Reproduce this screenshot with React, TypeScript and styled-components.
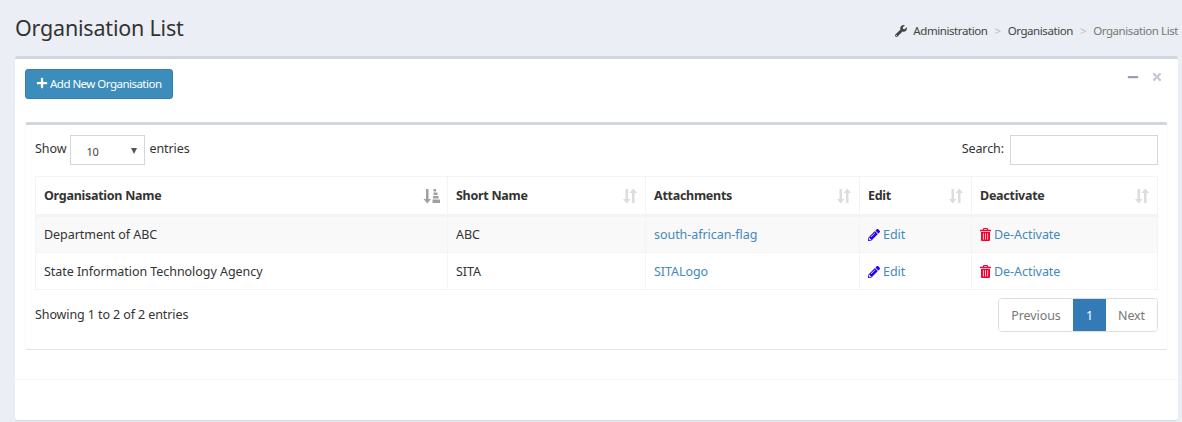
import React from "react";
import styled, { createGlobalStyle } from "styled-components";
import { FaWrench, FaPlus, FaMinus, FaTimes, FaPencilAlt } from "react-icons/fa";

const Global = createGlobalStyle`
  html, body { margin: 0; padding: 0; background: #ecf0f5; }
  body { font-family: "Noto Sans", "Open Sans", sans-serif; color: #333; overflow: hidden; }
  * { box-sizing: border-box; }
`;

const Page = styled.div`
  width: 1182px;
  height: 422px;
  padding: 0 4px 0 15px;
  background: #ebeef4;
  overflow: hidden;
`;
const Header = styled.header`
  height: 56px;
  display: flex;
  justify-content: space-between;
  align-items: flex-start;
`;
const Title = styled.h1`
  margin: 13px 0 0;
  font-size: 21.5px;
  line-height: 30px;
  font-weight: 400;
  letter-spacing: -0.2px;
  color: #333;
`;
const Crumbs = styled.nav`
  display: flex;
  align-items: center;
  margin-top: 22px;
  font-size: 11.5px;
  line-height: 18px;
  letter-spacing: -0.42px;
  color: #444;
`;
const CrumbIcon = styled(FaWrench)`
  width: 12px;
  height: 12px;
  margin-right: 6px;
  color: #444;
`;
const Sep = styled.span`
  color: #bbb;
  margin: 0 7px;
`;
const CrumbCurrent = styled.span`
  color: #777;
`;
const Panel = styled.section`
  height: 364px;
  background: #fff;
  border-top: 3px solid #d2d6de;
  border-radius: 3px;
  box-shadow: 0 1px 1px rgba(0, 0, 0, 0.1);
  display: flex;
  flex-direction: column;
`;
const PanelBody = styled.div`
  padding: 10px 10px 0;
  height: 321px;
  border-bottom: 1px solid #f4f4f4;
`;
const TopRow = styled.div`
  display: flex;
  justify-content: space-between;
  align-items: flex-start;
  height: 53px;
`;
const AddButton = styled.button`
  display: inline-flex;
  align-items: center;
  gap: 2px;
  width: 148px;
  height: 30px;
  padding: 0 0 2px 10px;
  background: #3c8dbc;
  border: 1px solid #367fa9;
  border-radius: 3px;
  color: #fff;
  font-family: inherit;
  font-size: 11.5px;
  letter-spacing: -0.52px;
  white-space: nowrap;
`;
const PlusIcon = styled(FaPlus)`
  width: 12px;
  height: 12px;
`;
const Tools = styled.div`
  display: flex;
  align-items: center;
  gap: 12px;
  padding: 2px 5px 0 0;
  color: #97a0b3;
`;
const MinusIcon = styled(FaMinus)`
  width: 12px;
  height: 12px;
`;
const TimesIcon = styled(FaTimes)`
  width: 12px;
  height: 12px;
  color: #c4c9d4;
`;
const InnerBox = styled.div`
  height: 228px;
  padding: 10px 9px 0;
  border-top: 3px solid #d2d6de;
  border-bottom: 1px solid #e4e4e4;
  border-left: 1px solid #fafafa;
  border-right: 1px solid #fafafa;
  border-radius: 3px;
`;
const Controls = styled.div`
  display: flex;
  justify-content: space-between;
  align-items: center;
  height: 30px;
  margin-bottom: 11px;
  font-size: 12.5px;
  letter-spacing: -0.08px;
  color: #333;
`;
const Inline = styled.label`
  display: flex;
  align-items: center;
  gap: 4px;
`;
const LabelText = styled.span`
  position: relative;
  top: -2px;
`;
const FakeSelect = styled.div`
  position: relative;
  width: 75px;
  height: 30px;
  border: 1px solid #d2d6de;
  padding: 6px 0 0 15px;
  font-size: 11px;
  line-height: 20px;
  letter-spacing: -0.3px;
  color: #444;
  &::after {
    content: "";
    position: absolute;
    right: 7px;
    top: 12px;
    border-style: solid;
    border-width: 6px 3px 0;
    border-color: #555 transparent transparent;
  }
`;
const SearchInput = styled.input`
  width: 148px;
  height: 30px;
  margin-left: 2px;
  border: 1px solid #d2d6de;
  outline: none;
  background: #fff;
`;
const Table = styled.table`
  width: 1122px;
  table-layout: fixed;
  border-collapse: collapse;
  border: 1px solid #f4f4f4;
  font-size: 12.5px;
  letter-spacing: -0.05px;
  color: #333;
`;
const Th = styled.th<{ $w: number }>`
  width: ${(p) => p.$w}px;
  height: 39px;
  padding: 0 8px;
  text-align: left;
  font-weight: 700;
  font-size: 12.5px;
  letter-spacing: -0.27px;
  border: 1px solid #f4f4f4;
  border-bottom: 3px solid #f4f4f4;
`;
const HeadInner = styled.div`
  display: flex;
  justify-content: space-between;
  align-items: center;
`;
const Td = styled.td<{ $odd?: boolean }>`
  height: 37px;
  padding: ${(p) => (p.$odd ? 0 : 1)}px 8px 0;
  border: 1px solid #f4f4f4;
  background: ${(p) => (p.$odd ? "#f9f9f9" : "#fff")};
  white-space: nowrap;
`;
const LinkText = styled.a`
  color: #4389bd;
  text-decoration: none;
`;
const EditIcon = styled(FaPencilAlt)`
  width: 12px;
  height: 12px;
  margin-right: 3px;
  vertical-align: -1.5px;
  color: #2a00f0;
`;
const TrashSvg = styled.svg`
  width: 11px;
  height: 13px;
  margin-right: 3px;
  vertical-align: -2px;
  color: #f5002d;
`;
const Foot = styled.div`
  display: flex;
  justify-content: space-between;
  align-items: flex-start;
  margin-top: 8px;
  font-size: 12.5px;
  letter-spacing: -0.1px;
`;
const Info = styled.div`
  padding-top: 8px;
  line-height: 18px;
  color: #333;
`;
const Pager = styled.div`
  display: flex;
  height: 34px;
  border: 1px solid #ddd;
  border-radius: 4px;
  font-size: 12.5px;
  color: #777;
  line-height: 33px;
  overflow: hidden;
`;
const PageBtn = styled.span<{ $w: number; $active?: boolean }>`
  width: ${(p) => p.$w}px;
  text-align: center;
  background: ${(p) => (p.$active ? "#337ab7" : "#fff")};
  color: ${(p) => (p.$active ? "#fff" : "#777")};
`;

const SortSvg = styled.svg<{ $dark?: boolean; $w: number }>`
  width: ${(p) => p.$w}px;
  height: 16px;
  margin-right: ${(p) => (p.$dark ? -1 : 0)}px;
  color: ${(p) => (p.$dark ? "#a0a0a0" : "#ddd")};
  flex: none;
`;
const SortIcon = () => (
  <SortSvg $w={14} viewBox="0 0 14 16" fill="currentColor">
    <path d="M2.500 1h2.500v10h2.500L3.750 15.500 0 11h2.500z" />
    <path d="M9 15h2.500V5H14L10.250 .5 6.500 5H9z" />
  </SortSvg>
);
const SortActive = () => (
  <SortSvg $dark $w={17} viewBox="0 0 17 16" fill="currentColor">
    <path d="M3 1h2.500v10H8L4.250 15.500.5 11H3z" />
    <path d="M10.500 1h2.500v2.500h-2.500zM10.500 4.500h4V7h-4zM10 8h5.500v2.500H10zM9.500 11.500H17V15H9.500z" />
  </SortSvg>
);
const Trash = () => (
  <TrashSvg viewBox="0 0 11 13" fill="currentColor">
    <path d="M3.500 0h4l.8 1.800H11v1.400H0V1.800h2.700zM4.200 1 3.900 1.800h3.200L6.800 1z" fillRule="evenodd" />
    <path
      d="M1 4h9v7.700c0 .8-.5 1.300-1.200 1.300H2.200C1.500 13 1 12.500 1 11.700zM2.900 5.200v6.300h.8V5.200zM5.100 5.200v6.300h.8V5.200zM7.300 5.200v6.300h.8V5.200z"
      fillRule="evenodd"
    />
  </TrashSvg>
);

const heads: [string, number, boolean][] = [
  ["Organisation Name", 412, true],
  ["Short Name", 198, false],
  ["Attachments", 214, false],
  ["Edit", 112, false],
  ["Deactivate", 186, false],
];
const rows = [
  ["Department of ABC", "ABC", "south-african-flag"],
  ["State Information Technology Agency", "SITA", "SITALogo"],
];

export default function App() {
  return (
    <Page>
      <Global />
      <Header>
        <Title>Organisation List</Title>
        <Crumbs>
          <CrumbIcon />
          <span>Administration</span>
          <Sep>&gt;</Sep>
          <span>Organisation</span>
          <Sep>&gt;</Sep>
          <CrumbCurrent>Organisation List</CrumbCurrent>
        </Crumbs>
      </Header>
      <Panel>
        <PanelBody>
          <TopRow>
            <AddButton>
              <PlusIcon />
              Add New Organisation
            </AddButton>
            <Tools>
              <MinusIcon />
              <TimesIcon />
            </Tools>
          </TopRow>
          <InnerBox>
            <Controls>
              <Inline>
                <LabelText>Show</LabelText>
                <FakeSelect>10</FakeSelect>
                <LabelText>entries</LabelText>
              </Inline>
              <Inline>
                <LabelText>Search:</LabelText>
                <SearchInput />
              </Inline>
            </Controls>
            <Table>
              <thead>
                <tr>
                  {heads.map(([h, w, active]) => (
                    <Th key={h} $w={w}>
                      <HeadInner>
                        {h}
                        {active ? <SortActive /> : <SortIcon />}
                      </HeadInner>
                    </Th>
                  ))}
                </tr>
              </thead>
              <tbody>
                {rows.map((r, i) => (
                  <tr key={r[0]}>
                    <Td $odd={i === 0}>{r[0]}</Td>
                    <Td $odd={i === 0}>{r[1]}</Td>
                    <Td $odd={i === 0}>
                      <LinkText>{r[2]}</LinkText>
                    </Td>
                    <Td $odd={i === 0}>
                      <LinkText>
                        <EditIcon />
                        Edit
                      </LinkText>
                    </Td>
                    <Td $odd={i === 0}>
                      <LinkText>
                        <Trash />
                        De-Activate
                      </LinkText>
                    </Td>
                  </tr>
                ))}
              </tbody>
            </Table>
            <Foot>
              <Info>Showing 1 to 2 of 2 entries</Info>
              <Pager>
                <PageBtn $w={74}>Previous</PageBtn>
                <PageBtn $w={33} $active>
                  1
                </PageBtn>
                <PageBtn $w={51}>Next</PageBtn>
              </Pager>
            </Foot>
          </InnerBox>
        </PanelBody>
      </Panel>
    </Page>
  );
}
